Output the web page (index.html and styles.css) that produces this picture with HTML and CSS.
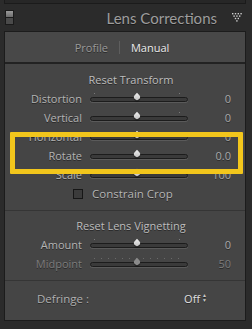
FILE: index.html
```html
<!DOCTYPE html>
<html>
<head>
  <title>Lens Corrections</title>
  <link rel="stylesheet" href="styles.css">
</head>
<body>
  <div class="prev-panel"></div>

  <!-- Panel header -->
  <header class="panel-header">
    <span class="switch"><span class="switch-top"></span><span class="switch-bottom"></span></span>
    <h1 class="title">Lens Corrections</h1>
    <svg class="collapse" width="10" height="9" viewBox="0 0 10 9">
      <g fill="#cfcfcf">
        <rect x="0" y="0" width="1.4" height="1.4"/><rect x="2.8" y="0" width="1.4" height="1.4"/><rect x="5.6" y="0" width="1.4" height="1.4"/><rect x="8.4" y="0" width="1.4" height="1.4"/>
        <rect x="1.4" y="2.4" width="1.4" height="1.4"/><rect x="4.2" y="2.4" width="1.4" height="1.4"/><rect x="7" y="2.4" width="1.4" height="1.4"/>
        <rect x="2.8" y="4.8" width="1.4" height="1.4"/><rect x="5.6" y="4.8" width="1.4" height="1.4"/>
        <rect x="4.2" y="7.2" width="1.4" height="1.4"/>
      </g>
    </svg>
  </header>

  <section class="panel">
    <div class="tabs">
      <span class="tab">Profile</span>
      <span class="tab-sep"></span>
      <span class="tab active">Manual</span>
    </div>

    <div class="group">
      <div class="group-title">Reset Transform</div>
      <div class="row">
        <span class="label">Distortion</span>
        <div class="slider"><i class="tick t-left"></i><i class="tick t-right"></i><span class="thumb"></span></div>
        <span class="value">0</span>
      </div>
      <div class="row">
        <span class="label">Vertical</span>
        <div class="slider"><i class="tick t-right"></i><span class="thumb"></span></div>
        <span class="value">0</span>
      </div>
      <div class="row">
        <span class="label">Horizontal</span>
        <div class="slider"><span class="thumb"></span></div>
        <span class="value">0</span>
      </div>
      <div class="row">
        <span class="label">Rotate</span>
        <div class="slider"><span class="thumb"></span></div>
        <span class="value">0.0</span>
      </div>
      <div class="row">
        <span class="label">Scale</span>
        <div class="slider"><span class="thumb"></span></div>
        <span class="value">100</span>
      </div>
      <div class="row check-row">
        <span class="checkbox"></span>
        <span class="check-label">Constrain Crop</span>
      </div>

      <!-- highlight box -->
      <div class="highlight"></div>
    </div>

    <div class="group">
      <div class="group-title">Reset Lens Vignetting</div>
      <div class="row">
        <span class="label">Amount</span>
        <div class="slider"><i class="tick t-left"></i><i class="tick t-right"></i><span class="thumb"></span></div>
        <span class="value">0</span>
      </div>
      <div class="row dim">
        <span class="label">Midpoint</span>
        <div class="slider dotted"><span class="thumb"></span></div>
        <span class="value">50</span>
      </div>
    </div>

    <div class="defringe">
      <span class="defringe-label">Defringe :</span>
      <span class="defringe-value">Off<span class="updown">&#9650;<br>&#9660;</span></span>
    </div>
  </section>
</body>
</html>
```

FILE: styles.css
```css
body {
  margin: 0;
  width: 252px;
  height: 329px;
  overflow: hidden;
  background-color: #2b2b2b;
  font-family: "Open Sans", sans-serif;
  font-size: 11px;
  color: #b4b4b4;
  text-shadow: 0 1px 0 rgba(0, 0, 0, 0.45);
}

.prev-panel {
  margin: 0 6px 0 4px;
  height: 3px;
  background-color: #272727;
  border: 1px solid #1b1b1b;
  border-top: none;
}

.panel-header {
  height: 27px;
  display: flex;
  align-items: center;
  padding: 0 10px 0 5px;
}

.switch {
  display: flex;
  flex-direction: column;
  width: 7px;
  height: 13px;
  border: 1px solid #1a1a1a;
  background-color: #1a1a1a;
  gap: 1px;
}

.switch-top {
  flex: 1;
  background: linear-gradient(#9a9a9a, #6c6c6c);
}

.switch-bottom {
  flex: 1;
  background-color: #4a4a4a;
}

.title {
  flex: 1;
  margin: 0;
  padding-right: 15px;
  text-align: right;
  font-family: "Lato", sans-serif;
  font-size: 15px;
  font-weight: normal;
  color: #9d9d9d;
}

.panel {
  margin: 0 6px 0 4px;
  height: 290px;
  background-color: #454545;
  border: 1px solid #1c1c1c;
  box-sizing: border-box;
}

.tabs {
  height: 30px;
  display: flex;
  align-items: center;
  justify-content: center;
  gap: 11px;
  background-color: #484848;
  border-bottom: 2px solid #222;
  padding-right: 6px;
}

.tab {
  color: #9a9a9a;
}

.tab.active {
  color: #ececec;
}

.tab-sep {
  width: 1px;
  height: 13px;
  background-color: #5e5e5e;
}

.group {
  position: relative;
  padding-top: 6px;
  padding-bottom: 7px;
  border-bottom: 1px solid #353535;
}

.group + .group {
  padding-top: 5px;
}

.group-title {
  height: 19px;
  line-height: 19px;
  text-align: center;
  padding-left: 12px;
  color: #bdbdbd;
}

.row {
  display: flex;
  align-items: center;
  height: 19px;
}

.label {
  width: 77px;
  text-align: right;
}

.slider {
  position: relative;
  width: 96px;
  height: 3px;
  margin-left: 8px;
  margin-top: 2px;
  border: 1px solid #1c1c1c;
  border-radius: 3px;
  background-color: #3a3a3a;
  box-shadow: 0 1px 0 #5a5a5a;
}

.tick {
  position: absolute;
  top: -5px;
  width: 1px;
  height: 1px;
  background-color: #7a7a7a;
}

.t-left {
  left: 3px;
}

.t-right {
  right: 7px;
}

.thumb {
  position: absolute;
  left: 43px;
  top: -4px;
  width: 6px;
  height: 6px;
  border-radius: 0 50% 50% 50%;
  background: linear-gradient(135deg, #f0f0f0, #bdbdbd);
  transform: rotate(45deg);
  box-shadow: 1px 1px 1px rgba(0, 0, 0, 0.4);
}

.value {
  flex: 1;
  text-align: right;
  padding-right: 14px;
  color: #a9a9a9;
}

.check-row {
  padding-left: 68px;
}

.checkbox {
  width: 8px;
  height: 8px;
  border: 1px solid #161616;
  background-color: #3b3b3b;
}

.check-label {
  margin-left: 9px;
  font-size: 11.5px;
}

.highlight {
  position: absolute;
  left: 5px;
  top: 68px;
  width: 223px;
  height: 32px;
  border: 5px solid #f2c61c;
  border-radius: 1px;
}

.dim {
  color: #7c7c7c;
}

.dim .value {
  color: #7c7c7c;
}

.dim .thumb {
  background: #8a8a8a;
}

.dotted::before {
  content: "";
  position: absolute;
  left: 3px;
  right: 4px;
  top: -5px;
  height: 1px;
  background: repeating-linear-gradient(90deg, #6a6a6a 0 1px, transparent 1px 7px);
}

.defringe {
  display: flex;
  align-items: center;
  height: 34px;
  padding-left: 32px;
  padding-right: 38px;
}

.defringe-label {
  flex: 1;
  font-size: 11.5px;
  color: #b0b0b0;
}

.defringe-value {
  display: flex;
  align-items: center;
  gap: 2px;
  color: #e0e0e0;
}

.updown {
  font-size: 5px;
  line-height: 5px;
  color: #c8c8c8;
}
```
